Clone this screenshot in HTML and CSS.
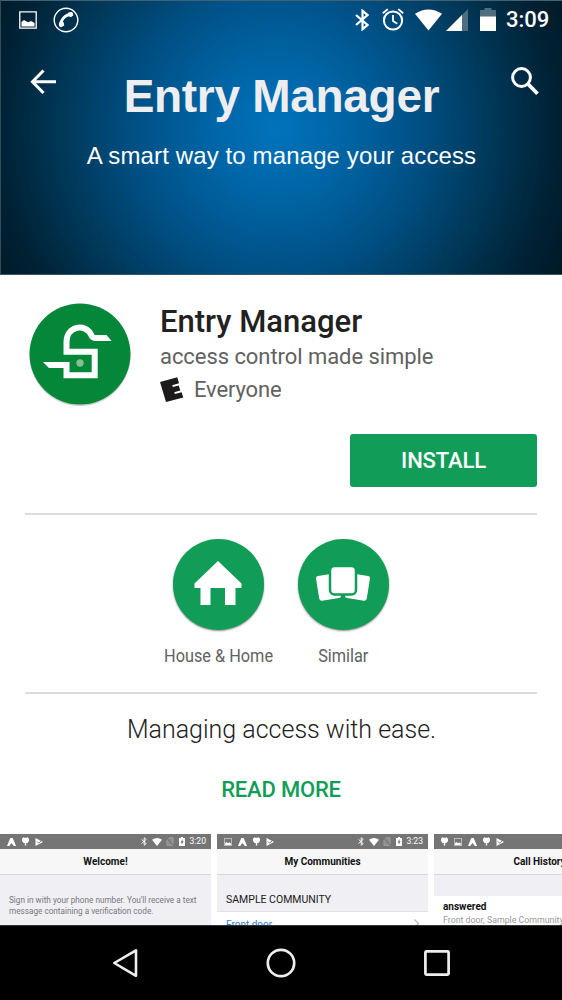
FILE: index.html
```html
<!DOCTYPE html>
<html lang="en">
<head>
<meta charset="utf-8">
<title>Entry Manager</title>
<link rel="stylesheet" href="styles.css">
</head>
<body>
<svg class="defs" width="0" height="0" aria-hidden="true">
  <symbol id="picture" viewBox="0 0 18 18"><path fill="none" stroke="currentColor" stroke-width="1.3" d="M.8.8h16.4v16.4H.8z"/><path fill="currentColor" d="M2.500 15.500V11l2.500-2 2.500 1.500 2 .7 2.500-1.200 3.500 2V15.500z"/></symbol>
  <symbol id="bluetooth" viewBox="0 0 14 22"><path fill="none" stroke="currentColor" stroke-width="2.200" d="M1 6l11.500 10L7.500 20.200V1.800L12.500 6 1 16"/></symbol>
  <symbol id="wifi" viewBox="0 0 28 22"><path fill="currentColor" d="M0 4.500Q14-4.500 28 4.500L14 22z"/></symbol>
  <symbol id="nosim" viewBox="0 0 8 9"><path fill="#8c8c8c" stroke="#a0a0a0" stroke-width="1" d="M1 3L3.500.8H7v7.500H1z"/><path stroke="#6c6c6c" d="M.5.8l7 7.700"/></symbol>
  <symbol id="charge" viewBox="0 0 6 9"><path fill="currentColor" d="M2 0h2v1h2v8H0V1h2z"/><path fill="#757575" d="M3.600 2L1.500 5.400h1.200V7.800L4.700 4.300H3.500z"/></symbol>
  <symbol id="peak" viewBox="0 0 9 8"><path fill="currentColor" d="M3.300 0h2.400L9 8H6.800L4.500 5 2.200 8H0z"/></symbol>
  <symbol id="droid" viewBox="0 0 7 9"><path fill="currentColor" d="M1 0l1 .7h3L6 0v1.200h1V4L5.500 6H4.200v2.500H2.800V6H1.500L0 4V1.200h1z"/></symbol>
  <symbol id="play" viewBox="0 0 8 8"><path fill="currentColor" d="M.5 0L8 4 .5 8z"/><path fill="none" stroke="#757575" stroke-width=".9" d="M2 3.500l1.700 1.700L7.500 1.500"/></symbol>
</svg>

<header class="banner">
  <div class="status">
    <div class="status-left">
      <svg width="18" height="18"><use href="#picture"/></svg>
      <svg width="26" height="26" viewBox="0 0 26 26"><circle cx="13" cy="13" r="11.800" fill="none" stroke="#fff" stroke-width="1.400"/><path fill="none" stroke="#fff" stroke-width="2.800" d="M8 19C6.800 13.500 12 7.500 18.500 7.500"/><path fill="#fff" d="M6 15.500l4.500-.5.800 3.500L8 20.300c-1.800 0-2.500-2.500-2-4.800zM14.800 5.800l3-.8c2-.2 2.900 1.800 2.300 3.500L17.800 10.300l-3-1.800z"/></svg>
    </div>
    <div class="status-right">
      <svg class="bt" width="14" height="22"><use href="#bluetooth"/></svg>
      <svg class="alarm" width="22" height="23" viewBox="0 0 22 23"><circle cx="11" cy="12.500" r="9.100" fill="none" stroke="#fff" stroke-width="2"/><path fill="none" stroke="#fff" stroke-width="1.800" d="M11 7v6l4.300 2.700M.8 5.300l5-4.200M21.200 5.300l-5-4.200"/></svg>
      <svg class="wf" width="27" height="22"><use href="#wifi"/></svg>
      <svg class="signal" width="22" height="22" viewBox="0 0 22 22"><path fill="#4f6f80" d="M22 0v22H0z"/><path fill="#fff" d="M16 6v16H0z"/></svg>
      <svg class="battery" width="16" height="23" viewBox="0 0 16 23"><path fill="#4f6f80" d="M4.500 0h7v2H16v7H0V2h4.500z"/><path fill="#fff" d="M0 8.500h16V23H0z"/></svg>
      <span class="clock">3:09</span>
    </div>
  </div>
  <div class="toolbar">
    <svg width="26" height="26" viewBox="0 0 26 26"><path fill="none" stroke="#fff" stroke-width="3" d="M13.500 1.500L2.500 12.800l11 11.200M2.500 12.800H26"/></svg>
    <svg width="28" height="29" viewBox="0 0 28 29"><circle cx="10.500" cy="10.500" r="8.900" fill="none" stroke="#fff" stroke-width="3"/><path stroke="#fff" stroke-width="3.800" d="M17 17l9.500 9.800"/></svg>
  </div>
  <div class="hero-title">Entry Manager</div>
  <div class="hero-sub">A smart way to manage your access</div>
</header>

<main>
  <section class="app">
    <svg class="logo" width="102" height="104" viewBox="0 0 102 104"><circle cx="51" cy="52.500" r="50.500" fill="#d0d0d0"/><circle cx="51" cy="51" r="50.500" fill="#05873a"/><path fill="none" stroke="#fff" stroke-width="6" d="M20 62H37.500V72.300H65.700V48.800H37.500V39.500C37.500 22 57 20.500 62 31.500Q63.300 35 66 35H77"/><path fill="#fff" d="M14 59h7v6h-1zM76 32h1.500l5 6H76z"/><circle cx="51" cy="60" r="3.700" fill="#86bd91"/></svg>
    <div class="app-info">
      <h1>Entry Manager</h1>
      <p class="tagline">access control made simple</p>
      <p class="rating"><svg width="24" height="26" viewBox="0 0 24 26"><path fill="#1c1a1b" d="M0 5L17.300.3l1.700 6-6.700 1.900.5 1.900 6-1.600 1.500 5-6 1.700.5 1.900 6.800-1.900 1.700 5.400L6 25z"/></svg><span>Everyone</span></p>
    </div>
  </section>
  <button class="install">INSTALL</button>
  <hr>
  <nav class="categories">
    <a class="cat"><span class="disc"><svg class="house" width="48" height="44" viewBox="0 0 48 44"><path fill="#fff" d="M24 0l23.500 22.500V27H41.500V44H31V27H16.500V44H6.500V27H.5V22.500z"/></svg></span><span class="label">House &amp; Home</span></a>
    <a class="cat"><span class="disc"><svg class="deck" width="56" height="36" viewBox="0 0 56 36"><g fill="#fff"><rect x="2.500" y="8.500" width="22" height="25" rx="2.500" transform="rotate(-9 13.500 21)"/><rect x="31.500" y="8.500" width="22" height="25" rx="2.500" transform="rotate(9 42.500 21)"/><rect x="15" y="0" width="26" height="28.500" rx="4.500" stroke="#119d57" stroke-width="2.500"/></g></svg></span><span class="label">Similar</span></a>
  </nav>
  <hr>
  <p class="summary">Managing access with ease.</p>
  <a class="more">READ MORE</a>

  <section class="shots">
    <article class="shot">
      <div class="mini-status"><svg width="9" height="8"><use href="#peak"/></svg><svg width="7" height="9"><use href="#droid"/></svg><svg width="8" height="8"><use href="#play"/></svg><div class="mini-right"><svg width="6" height="9"><use href="#bluetooth"/></svg><svg width="10" height="8"><use href="#wifi"/></svg><svg width="8" height="9"><use href="#nosim"/></svg><svg width="6" height="9"><use href="#charge"/></svg><b>3:20</b></div></div>
      <div class="mini-title">Welcome!</div>
      <div class="signin">Sign in with your phone number. You'll receive a text<br>message containing a verification code.</div>
    </article>
    <article class="shot">
      <div class="mini-status"><svg width="8" height="8"><use href="#picture"/></svg><svg width="9" height="8"><use href="#peak"/></svg><svg width="7" height="9"><use href="#droid"/></svg><svg width="8" height="8"><use href="#play"/></svg><div class="mini-right"><svg width="6" height="9"><use href="#bluetooth"/></svg><svg width="10" height="8"><use href="#wifi"/></svg><svg width="8" height="9"><use href="#nosim"/></svg><svg width="6" height="9"><use href="#charge"/></svg><b>3:23</b></div></div>
      <div class="mini-title">My Communities</div>
      <div class="group">SAMPLE COMMUNITY</div>
      <div class="door"><span>Front door</span><svg width="5" height="9" viewBox="0 0 5 9"><path fill="none" stroke="#b8b8bc" stroke-width="1.200" d="M.5.500l4 4-4 4"/></svg></div>
    </article>
    <article class="shot">
      <div class="mini-status"><svg width="7" height="9"><use href="#droid"/></svg><svg width="8" height="8"><use href="#picture"/></svg><svg width="9" height="8"><use href="#peak"/></svg><svg width="7" height="9"><use href="#droid"/></svg><svg width="8" height="8"><use href="#play"/></svg></div>
      <div class="mini-title">Call History</div>
      <div class="gap"></div>
      <div class="call"><strong>answered</strong><span>Front door, Sample Community</span></div>
    </article>
  </section>
</main>

<footer class="navbar">
  <svg width="26" height="30" viewBox="0 0 26 30"><path fill="none" stroke="#eee" stroke-width="2.600" stroke-linejoin="round" d="M24 2.300v25.500L2.300 15z"/></svg>
  <svg width="30" height="30" viewBox="0 0 30 30"><circle cx="15" cy="15" r="13.200" fill="none" stroke="#eee" stroke-width="2.700"/></svg>
  <svg width="26" height="26" viewBox="0 0 26 26"><rect x="1.400" y="1.400" width="23.200" height="23.200" rx="1" fill="none" stroke="#eee" stroke-width="2.700"/></svg>
</footer>
</body>
</html>
```
FILE: styles.css
```css
* { box-sizing: border-box; }
body { margin: 0; width: 562px; height: 1000px; overflow: hidden; display: flex; flex-direction: column; background: #fff; font-family: Roboto, sans-serif; color: #212121; }
svg { display: block; flex: none; }
.defs { position: absolute; }
p, h1 { margin: 0; }

.banner { position: relative; flex: none; height: 275px; color: #fff; text-align: center; border-top: 1px solid #416174; border-left: 1px solid #304d5c; border-bottom: 1px solid #36566a; background: radial-gradient(circle 355px at 276px 128px, #0073bd 0, #0064a4 20%, #005085 40%, #003a5c 59%, #002235 78%, #00111a 100%); font-family: "Liberation Sans", Arial, sans-serif; }
.status { display: flex; justify-content: space-between; height: 37px; padding: 0 13px 0 18px; align-items: center; font-family: Roboto, sans-serif; }
.status-left, .status-right { display: flex; align-items: center; }
.status-left { gap: 16px; }
.alarm { margin-left: 13.5px; }
.wf { margin-left: 11px; }
.signal { margin-left: 3.5px; }
.battery { margin-left: 12.5px; }
.clock { margin-left: 10px; width: 43px; font-size: 22px; font-weight: 500; line-height: 37px; white-space: nowrap; }
.toolbar { position: absolute; top: 66px; left: 29px; right: 23px; display: flex; align-items: center; justify-content: space-between; }
.hero-title { margin-top: 33px; font-size: 46px; line-height: 50px; font-weight: 700; color: #eeeef0; letter-spacing: -.3px; }
.hero-sub { margin-top: 20px; font-size: 24px; line-height: 30px; letter-spacing: .12px; }

main { flex: none; height: 650px; overflow: hidden; display: flex; flex-direction: column; }
.app { display: flex; padding: 28px 0 0 29px; height: 159px; }
.app-info { margin-left: 29px; }
h1 { font-size: 31px; font-weight: 500; line-height: 37px; white-space: nowrap; }
.tagline { font-size: 22px; letter-spacing: -.06px; line-height: 34px; color: #616161; }
.rating { display: flex; align-items: center; gap: 10px; height: 32px; font-size: 22px; letter-spacing: -.15px; line-height: 32px; color: #616161; }
.install { align-self: flex-end; margin-right: 25px; width: 187px; height: 53px; padding: 1px 0 0; border: 0; border-radius: 3px; background: #119d57; color: #fff; font: 500 22px/52px Roboto, sans-serif; letter-spacing: -.15px; }
hr { flex: none; width: 512px; height: 2px; margin: 26px 25px 0; border: 0; background: #dcdcdc; }
.categories { display: flex; justify-content: center; gap: 34px; height: 151px; padding: 24px 1px 0 0; }
.cat { width: 91px; display: flex; flex-direction: column; align-items: center; }
.disc { flex: none; width: 91px; height: 91px; border-radius: 50%; background: #119d57; box-shadow: 0 1px 2px rgba(0,0,0,.45); display: flex; align-items: center; justify-content: center; }
.house { margin-bottom: 4px; }
.deck { margin-bottom: 1px; }
.label { margin: 15px 0 0 1px; font-size: 19px; line-height: 22px; color: #616161; white-space: nowrap; transform: scaleX(.857); }
.categories + hr { margin-top: 26px; }
.summary { margin-top: 20px; padding-left: 1px; text-align: center; font-size: 25px; font-weight: 300; line-height: 32px; }
.more { margin-top: 29px; text-align: center; font-size: 22px; font-weight: 500; line-height: 30px; letter-spacing: -.2px; color: #119d57; }

.shots { display: flex; gap: 6px; margin-top: 29px; height: 91px; }
.shot { flex: none; width: 211px; background: #efeff4; overflow: hidden; }
.mini-status { display: flex; align-items: center; gap: 6px; height: 15px; padding: 0 5px 0 7px; background: #757575; color: #fff; }
.mini-right { display: flex; align-items: center; gap: 4.5px; margin-left: auto; }
.mini-status b { font-size: 8.6px; font-weight: 400; line-height: 15px; }
.mini-title { height: 26px; background: #f7f7f7; border-bottom: 1px solid #d8d8da; text-align: center; font-size: 10px; font-weight: 700; line-height: 25px; color: #111; }
.signin { padding: 20px 9px 0; font-size: 8.2px; line-height: 11px; color: #77777c; white-space: nowrap; }
.group { height: 37px; padding: 14px 9px 0; font-size: 10.5px; line-height: 22px; border-bottom: 1px solid #e2e2e6; }
.door { display: flex; justify-content: space-between; padding: 7px 9px 0; height: 20px; background: #fff; font-size: 10px; line-height: 12px; color: #2a7fd4; }
.gap { height: 21px; }
.call { display: flex; flex-direction: column; height: 40px; padding: 4px 9px 0; background: #fff; font-size: 8.8px; line-height: 13px; color: #999; white-space: nowrap; }
.call strong { font-size: 10px; line-height: 14px; color: #111; }

.navbar { flex: none; height: 75px; padding: 0 112px; display: flex; justify-content: space-between; align-items: center; background: #000; border-top: 1px solid #333; }
```
